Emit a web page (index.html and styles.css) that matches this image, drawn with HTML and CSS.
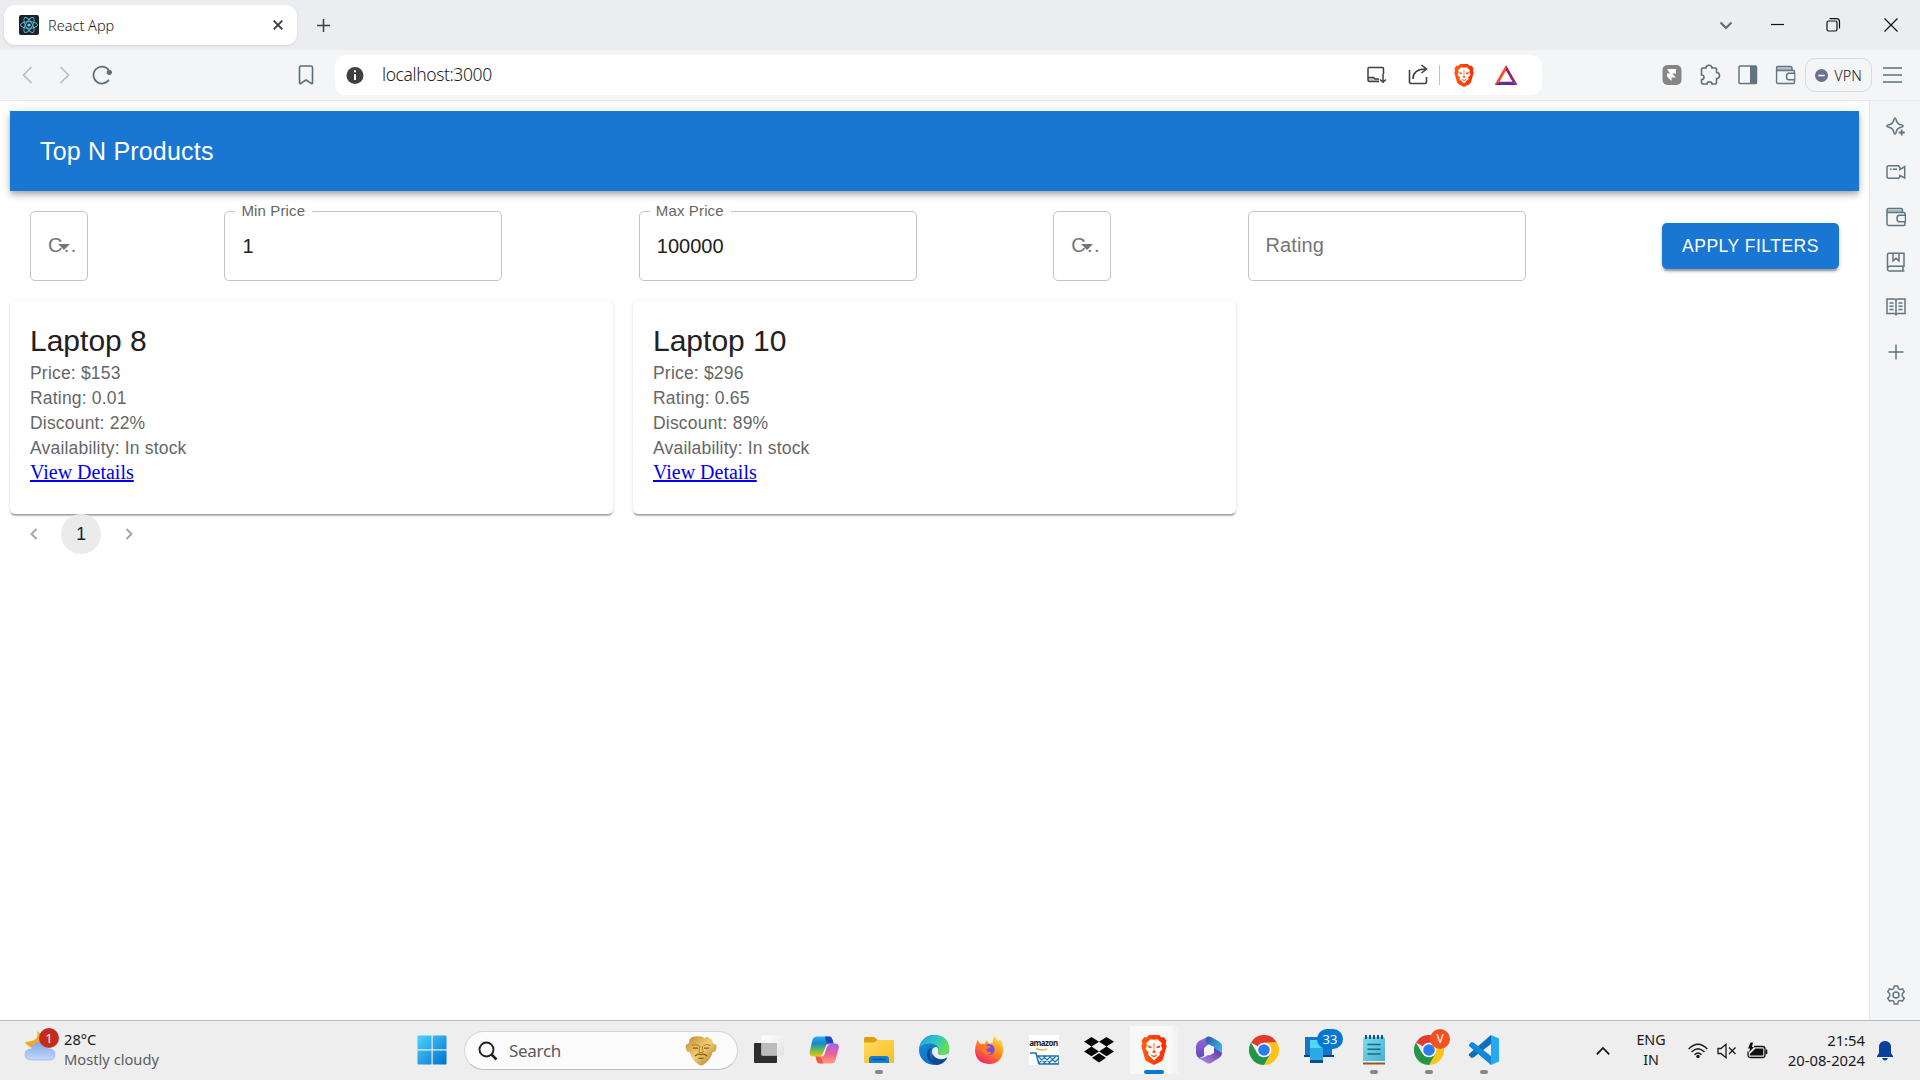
FILE: index.html
```html
<!DOCTYPE html>
<html lang="en">
<head>
<meta charset="utf-8">
<title>React App</title>
<link rel="stylesheet" href="styles.css">
</head>
<body>
<svg class="defs" width="0" height="0">
  <defs>
    <linearGradient id="brave" x1="0" x2="1"><stop offset="0" stop-color="#ff5a10"/><stop offset="1" stop-color="#ff2a00"/></linearGradient>
    <linearGradient id="win" x1="0" y1="0" x2="1" y2="1"><stop offset="0" stop-color="#4fd3ff"/><stop offset="1" stop-color="#0070cf"/></linearGradient>
    <linearGradient id="gold" x1="0" y1="0" x2="1" y2="1"><stop offset="0" stop-color="#c08a2c"/><stop offset=".5" stop-color="#efce78"/><stop offset="1" stop-color="#a86e16"/></linearGradient>
    <linearGradient id="cloud" x1="0" y1="0" x2="0" y2="1"><stop offset="0" stop-color="#7ea6e6"/><stop offset="1" stop-color="#c3d8f8"/></linearGradient>
    <linearGradient id="copA" x1="0" y1="0" x2="0" y2="1"><stop offset="0" stop-color="#20b4f4"/><stop offset=".35" stop-color="#1688c8"/><stop offset=".7" stop-color="#6fbf4a"/><stop offset="1" stop-color="#f4c20c"/></linearGradient>
    <linearGradient id="copB" x1="0" y1="0" x2="0" y2="1"><stop offset="0" stop-color="#a564f0"/><stop offset=".5" stop-color="#e8609a"/><stop offset="1" stop-color="#ffa070"/></linearGradient>
    <linearGradient id="folder" x1="0" y1="0" x2="1" y2="1"><stop offset="0" stop-color="#ffdc62"/><stop offset="1" stop-color="#fcbc1e"/></linearGradient>
    <linearGradient id="edgeTop" x1="0" y1="0" x2="1" y2=".5"><stop offset="0" stop-color="#1f9be0"/><stop offset=".5" stop-color="#2cc3d2"/><stop offset="1" stop-color="#62e04e"/></linearGradient>
    <linearGradient id="edgeLow" x1="0" y1="0" x2="1" y2="1"><stop offset="0" stop-color="#1a8fdc"/><stop offset="1" stop-color="#0a60b4"/></linearGradient>
    <linearGradient id="fox" x1=".8" y1="0" x2=".2" y2="1"><stop offset="0" stop-color="#ffe845"/><stop offset=".45" stop-color="#ff8a1e"/><stop offset="1" stop-color="#f0186c"/></linearGradient>
    <linearGradient id="mA" x1="0" y1="0" x2="0" y2="1"><stop offset="0" stop-color="#a068d8"/><stop offset="1" stop-color="#5a4cc0"/></linearGradient>
    <linearGradient id="mB" x1="0" y1="0" x2="1" y2="1"><stop offset="0" stop-color="#2456a8"/><stop offset="1" stop-color="#45c2f4"/></linearGradient>
    <linearGradient id="mC" x1="0" y1="1" x2="1" y2="0"><stop offset="0" stop-color="#b890ee"/><stop offset="1" stop-color="#553094"/></linearGradient>
    <linearGradient id="note" x1="0" y1="0" x2="1" y2="1"><stop offset="0" stop-color="#7fdcec"/><stop offset="1" stop-color="#45aed0"/></linearGradient>
    <linearGradient id="pane" x1="0" y1="0" x2="1" y2="1"><stop offset="0" stop-color="#ffffff"/><stop offset="1" stop-color="#e2e2e2"/></linearGradient>
    <symbol id="i-brave" viewBox="0 0 26 30">
      <path d="M8 0h10l2.500 2.600 2.300-.5L25.500 6l-.9 2.300 1 3-3.400 12.200c-.4 1.400-1.200 2.200-2.300 3L13 30l-6.900-3.500c-1.100-.8-1.900-1.600-2.300-3L.4 11.300l1-3L.5 6l2.700-3.900 2.300.5z" fill="url(#brave)"/>
      <path d="M13 4.800l3.600-.6 4.200 4-.8 2.200 1.400 3.600-3 3.600.5 2.200-2.700 2.400L13 25.400l-3.200-3.200-2.700-2.400.5-2.200-3-3.600L6 10.400l-.8-2.200 4.200-4z" fill="#fff"/>
      <path d="M6.500 10.300l4.300 1.400-.7 1.600-2.800-.7zM19.500 10.300l-4.300 1.400.7 1.600 2.800-.7zM12.500 8.200h1l-.2 7 1.700 1.700L13 18.300l-2-1.400 1.700-1.700zM9.500 18.900l3.500 2.200 3.500-2.200-1.400 2.300L13 22.300l-2.100-1.100z" fill="url(#brave)"/>
    </symbol>
    <symbol id="i-wallet" viewBox="0 0 20 20">
      <path d="M1 2.600h15v3.200H1z" fill="#aebac1"/>
      <path d="M19 8V6.600q0-1-1-1H1V3q0-1.500 1.500-1.500H15q1.500 0 1.500 1.500v2.600M1 5v11.800q0 1.600 1.600 1.600h15.200q1.200 0 1.200-1.200V15M19.500 8.200h-6.200q-2.300 0-2.300 3.300t2.300 3.300h6.200z" fill="none" stroke="#60757f" stroke-width="1.500"/>
    </symbol>
    <symbol id="i-chrome" viewBox="0 0 30 30">
      <path d="M15 15L2 7.500A15 15 0 0 1 28 7.500L15 8z" fill="#e33b2e"/>
      <path d="M28 7.500A15 15 0 0 1 15 30l6.500-11.300L15 7.500z" fill="#fcc419"/>
      <path d="M15 30A15 15 0 0 1 2 7.500L8.500 18.700 15 15l6.500 3.700z" fill="#249447"/>
      <circle cx="15" cy="15" r="7.300" fill="#fff"/><circle cx="15" cy="15" r="5.800" fill="#2c7cf0"/>
    </symbol>
  </defs>
</svg>

<div class="screen">
  <header class="tabstrip">
    <div class="tab">
      <svg class="favicon" width="20" height="20" viewBox="0 0 20 20"><rect width="20" height="20" rx="2" fill="#202124"/><g fill="none" stroke="#4fb8d4" stroke-width="1"><ellipse cx="10" cy="10" rx="8.500" ry="3.300"/><ellipse cx="10" cy="10" rx="8.500" ry="3.300" transform="rotate(60 10 10)"/><ellipse cx="10" cy="10" rx="8.500" ry="3.300" transform="rotate(120 10 10)"/></g><circle cx="10" cy="10" r="1.600" fill="#61dafb"/></svg>
      <span class="tab-title">React App</span>
      <svg width="10" height="10" viewBox="0 0 10 10"><path d="M.7.7l8.600 8.600M9.300.7L.7 9.300" stroke="#36393d" stroke-width="1.800"/></svg>
    </div>
    <svg class="new-tab" width="13" height="13" viewBox="0 0 13 13"><path d="M6.500 0v13M0 6.500h13" stroke="#3b3f44" stroke-width="1.500"/></svg>
    <div class="window-controls">
      <svg width="46" height="20" viewBox="0 0 46 20"><path d="M18.500 7.500l5.500 5.500 5.500-5.500" fill="none" stroke="#5c7079" stroke-width="2.200"/></svg>
      <svg width="56" height="20" viewBox="0 0 56 20"><path d="M23 9.500h13" stroke="#111" stroke-width="1.200"/></svg>
      <svg width="58" height="20" viewBox="0 0 58 20"><g fill="none" stroke="#111" stroke-width="1.200"><rect x="23" y="6" width="10" height="10" rx="1.500"/><path d="M25.500 3.600h7q3 0 3 3v7"/></g></svg>
      <svg width="58" height="20" viewBox="0 0 58 20"><path d="M22.500 3.500l13 13M35.500 3.500l-13 13" stroke="#111" stroke-width="1.200"/></svg>
    </div>
  </header>

  <nav class="toolbar">
    <svg width="38" height="22" viewBox="0 0 38 22"><path d="M23.500 3l-8 8 8 8" fill="none" stroke="#b4bfc5" stroke-width="1.700"/></svg>
    <svg width="38" height="22" viewBox="0 0 38 22"><path d="M14.500 3l8 8-8 8" fill="none" stroke="#b4bfc5" stroke-width="1.700"/></svg>
    <svg width="38" height="22" viewBox="0 0 38 22"><path d="M24.800 6A8.500 8.500 0 1 0 25 15.800" fill="none" stroke="#5c7079" stroke-width="1.700"/><circle cx="25.300" cy="8.300" r="2.600" fill="#5c7079"/></svg>
    <svg class="bookmark" width="38" height="22" viewBox="0 0 38 22"><path d="M12.500 3.500q0-1.500 1.500-1.500h10q1.500 0 1.500 1.500V19q0 1-1 .5L19 16l-5.500 3.500q-1 .5-1-.5z" fill="none" stroke="#5c7079" stroke-width="1.600"/></svg>
    <div class="urlbar">
      <svg width="20" height="20" viewBox="0 0 20 20"><circle cx="10" cy="10.500" r="8.500" fill="#3e4044"/><path d="M10 5.200v2M10 9v6" stroke="#fff" stroke-width="2"/></svg>
      <span class="url">localhost:3000</span>
      <svg width="42" height="22" viewBox="0 0 42 22"><path d="M13 13h5l1.300 1.500H24v3H13z" fill="#c9c9cc"/><g fill="none" stroke="#3e4044" stroke-width="1.500"><path d="M28.500 10V4.500q0-1-1-1H14q-1 0-1 1V16q0 1.500 1.500 1.500H24M12.500 13.500h6l1.500 1.500h4M28 10v8M25 15.500l3 2.700 3-2.700"/></g></svg>
      <svg width="42" height="22" viewBox="0 0 42 22"><g fill="none" stroke="#3e4044" stroke-width="1.600"><path d="M12.500 6v12q0 1.500 1.500 1.500h14q1.500 0 1.500-1.500v-5M16 15q0-9.500 12-10M24.500 1l5 4-5 4"/></g></svg>
      <span class="url-divider"></span>
      <svg width="42" height="24" viewBox="0 0 42 24"><use href="#i-brave" x="11" y="1" width="20" height="23"/></svg>
      <svg width="42" height="22" viewBox="0 0 42 22"><path d="M21 1L9.500 21l5-3.200L21 6.500z" fill="#ff4724"/><path d="M21 1l11.500 20-5-3.200L21 6.500z" fill="#9e1f63"/><path d="M9.500 21h23l-5-3.200h-13z" fill="#662d91"/></svg>
    </div>
    <svg class="extension" width="38" height="22" viewBox="0 0 38 22"><rect x="9.500" y="1" width="19" height="20" rx="5" fill="#868686"/><path d="M14 5h9v4.500h-4l4 4h-4.500V17L14 12.500V9.500h3z" fill="#fff"/></svg>
    <svg width="38" height="22" viewBox="0 0 38 22"><path d="M11.500 4H15q0-2.800 3-2.800T21 4h3.500q1 0 1 1v3.500q3 0 3 3t-3 3V19q0 1-1 1H21q0-2.300-2.500-2.300T16 20h-4q-1.500 0-1.500-1.500V15.500q2.500 0 2.500-2.300T10.500 11V5q0-1 1-1z" fill="none" stroke="#5c7079" stroke-width="1.600"/></svg>
    <svg width="38" height="22" viewBox="0 0 38 22"><rect x="10" y="2" width="17.500" height="17.500" rx="1" fill="none" stroke="#60757f" stroke-width="1.500"/><path d="M21 2h7v18h-7z" fill="#60757f"/></svg>
    <svg width="38" height="22" viewBox="0 0 38 22"><use href="#i-wallet" x="8.500" y="1" width="20" height="20"/></svg>
    <div class="vpn"><svg width="13" height="13" viewBox="0 0 13 13"><circle cx="6.500" cy="6.500" r="6.500" fill="#6b6f95"/><path d="M3.300 6.500h6.400" stroke="#fff" stroke-width="1.600"/></svg><span>VPN</span></div>
    <svg width="40" height="22" viewBox="0 0 40 22"><path d="M11 4h19M11 11h19M11 18h19" stroke="#5c7079" stroke-width="1.500"/></svg>
  </nav>

  <div class="browser-body">
    <main class="page">
      <div class="appbar"><h1>Top N Products</h1></div>
      <form class="filters">
        <div class="field select"><span class="select-label">C..</span><svg class="caret" width="12" height="6" viewBox="0 0 12 6"><path d="M0 0h12L6 6z" fill="#757575"/></svg></div>
        <div class="field input"><label>Min Price</label><span class="value">1</span></div>
        <div class="field input"><label>Max Price</label><span class="value">100000</span></div>
        <div class="field select"><span class="select-label">C..</span><svg class="caret" width="12" height="6" viewBox="0 0 12 6"><path d="M0 0h12L6 6z" fill="#757575"/></svg></div>
        <div class="field input"><span class="value placeholder">Rating</span></div>
        <button class="apply" type="button">APPLY FILTERS</button>
      </form>
      <section class="cards">
        <article class="card">
          <h2>Laptop 8</h2>
          <p>Price: $153</p><p>Rating: 0.01</p><p>Discount: 22%</p><p>Availability: In stock</p>
          <a href="#">View Details</a>
        </article>
        <article class="card">
          <h2>Laptop 10</h2>
          <p>Price: $296</p><p>Rating: 0.65</p><p>Discount: 89%</p><p>Availability: In stock</p>
          <a href="#">View Details</a>
        </article>
      </section>
      <div class="pagination">
        <svg width="40" height="40" viewBox="0 0 40 40"><path d="M23.500 15l-5 5 5 5" fill="none" stroke="#a6a6a6" stroke-width="2"/></svg>
        <span class="current">1</span>
        <svg width="40" height="40" viewBox="0 0 40 40"><path d="M17.500 15l5 5-5 5" fill="none" stroke="#a6a6a6" stroke-width="2"/></svg>
      </div>
    </main>
    <aside class="sidebar">
      <svg viewBox="0 0 20 20"><path d="M9 1q.8 0 1.200 2Q11 7 15 7.800q2.200.4 2.200 1.200T15 10.200Q11 11 10.200 15 9.800 17.200 9 17.200T7.800 15Q7 11 3 10.200.8 9.800.8 9T3 7.800Q7 7 7.800 3 8.200 1 9 1z" fill="none" stroke="#60757f" stroke-width="1.500"/><path d="M15.700 12.500v6M12.700 15.500h6" stroke="#60757f" stroke-width="1.800"/></svg>
      <svg viewBox="0 0 20 20"><path d="M3 3.700h9.500l1.500 2v2l4.700-3V16L14 13.500v1.200l-1.300 1.600H3q-2 0-2-2V5.700q0-2 2-2z" fill="none" stroke="#60757f" stroke-width="1.500"/><path d="M4 7.300h1.500M6.800 7.300H11" stroke="#60757f" stroke-width="1.500"/></svg>
      <svg viewBox="0 0 20 20"><use href="#i-wallet"/></svg>
      <svg viewBox="0 0 20 20"><path d="M3 1.200h15v13H4q-2.500 0-2.500 2.500T4 19h14.500M1.500 16.500v-14q0-1.300 1.500-1.300M17 14.500V19M7 1.500v7.300l3-2.500 3 2.500V1.500" fill="none" stroke="#60757f" stroke-width="1.500"/></svg>
      <svg viewBox="0 0 20 20"><path d="M1 2h7.500Q10 2 10 3.500 10 2 11.500 2H19v14.500h-7.500q-1.500 0-1.500 2 0-2-1.500-2H1zM10 3.500v14M3.500 6h4M3.500 9.200h4M3.500 12.400h4M12.500 6h4M12.500 9.200h4M12.500 12.400h4" fill="none" stroke="#60757f" stroke-width="1.500"/></svg>
      <svg viewBox="0 0 20 20"><path d="M10 2.500v15M2.500 10h15" stroke="#60757f" stroke-width="1.500"/></svg>
      <svg class="gear" viewBox="0 0 20 20"><path d="M8.300 1h3.400l.6 2.700 1.600.9 2.600-.8 1.800 3-2 1.900v2.600l2 1.900-1.800 3-2.600-.8-1.600.9-.6 2.700H8.300l-.6-2.700-1.600-.9-2.600.8-1.800-3 2-1.900V8.700l-2-1.900 1.800-3 2.600.8 1.600-.9z" fill="none" stroke="#60757f" stroke-width="1.500" stroke-linejoin="round"/><circle cx="10" cy="10" r="3" fill="none" stroke="#60757f" stroke-width="1.500"/></svg>
    </aside>
  </div>

  <footer class="taskbar">
    <div class="weather">
      <div class="weather-icon">
        <svg width="32" height="36" viewBox="0 0 32 36"><path d="M13 6q4 10-12 11 4 8 14 5 8-9-2-16z" fill="#f6a71c"/><path d="M8 35q-7 0-7-5.500T7.500 24q1.500-7 8-7 6 0 8 6.500 7.500 0 7.500 6T25 35z" fill="url(#cloud)" stroke="#8fb0e8" stroke-width=".6"/></svg>
        <span class="alert">1</span>
      </div>
      <div class="weather-text"><span>28°C</span><span class="cond">Mostly cloudy</span></div>
    </div>
    <div class="apps">
      <div class="app start"><svg width="30" height="30" viewBox="0 0 30 30"><path d="M1.500.5h13v13.800H.5V1.500q0-1 1-1zM15.700.5h12.800q1 0 1 1v12.800H15.700zM.5 15.500h14v14h-13q-1 0-1-1zM15.700 15.500h13.800v13q0 1-1 1H15.700z" fill="url(#win)"/></svg></div>
      <div class="search">
        <svg width="20" height="20" viewBox="0 0 20 20"><circle cx="8.500" cy="8.500" r="7" fill="none" stroke="#202020" stroke-width="1.900"/><path d="M13.500 13.500l5 5" stroke="#202020" stroke-width="2.500"/></svg>
        <span>Search</span>
        <svg width="32" height="30" viewBox="0 0 32 30"><path d="M7 1q5-1.500 11 0l1.500 1.500L22 .8l5 3 1 3.500 3.500 1.500q.5 4-1.500 7l-2.500.5q-1 5-5.500 9.500-3.500 3.700-5.500 3.700T10.500 26Q6 21.500 5 16.500l-3-1Q.3 12 .8 9L4 7l.5-3.500z" fill="url(#gold)"/><path d="M7 9.500q3.500-2 7 0M18.500 9.500q3.500-2 7 0M14.800 10l-.8 6.500h4l-.8-6.500" fill="none" stroke="#a8741f" stroke-width=".9"/><path d="M8 12.200h5M19 12.200h5M10 20q3-2.700 6-1.300 3-1.400 6 1.300M13.500 22.300h5" fill="none" stroke="#8d5a12" stroke-width="1.200"/></svg>
      </div>
      <div class="app"><svg width="30" height="30" viewBox="0 0 30 30"><rect x="0" y="8" width="23" height="20" rx="1" fill="#2e2e2e"/><rect x="7.500" y="0.500" width="22.500" height="20" rx="1" fill="url(#pane)"/><path d="M7.500 8H23v12.500H7.500z" fill="#bcbcbc"/></svg></div>
      <div class="app"><svg width="30" height="30" viewBox="0 0 30 30"><path d="M8 1.500h12q2.500 0 3.400 3l1.200 4h-4q-2 0-3 3l-2.300 7q-1 3-4 3H4.500q-4.500 0-3.800-4.500L3.400 5Q4.500 1.500 8 1.500z" fill="url(#copA)"/><path d="M16 1.500h4q2.500 0 3.400 3l1.200 4h-5q-2.500-.5-3-3z" fill="#1b46c4"/><path d="M22 28.500H11q-2.500 0-3.200-2.500l-1.300-4.500h4q2.500 0 3.500-3l2.500-7q1-3 4-3H26q4.500 0 3.800 4.500L26.500 25q-1 3.500-4.500 3.500z" fill="url(#copB)"/><path d="M14 28.500h-3q-2.500 0-3.200-2.500l-1.300-4.500H10q3 .5 4 7z" fill="#f4593c"/><path d="M17.500 9.500h3q-2 .5-3 3.500l-2 6.500q-.8 2-3 2h-1q1.500-.5 2.500-3.500z" fill="#fff" opacity=".85"/></svg></div>
      <div class="app running"><svg width="30" height="30" viewBox="0 0 30 30"><path d="M0 3.500Q0 2 1.500 2h9l3 3H30v6H0z" fill="#e0a00c"/><path d="M0 7.500h10L13.500 5H29q1 0 1 1v22H0z" fill="url(#folder)"/><path d="M5 28v-4q0-3 3-3h14q3 0 3 3v4z" fill="#1280d0"/><path d="M8.500 24.500h13" stroke="#0a4f96" stroke-width="1.500"/></svg></div>
      <div class="app"><svg width="30" height="30" viewBox="0 0 30 30"><circle cx="15" cy="15" r="15" fill="url(#edgeLow)"/><path d="M.2 13A15 15 0 0 1 15 0q15 0 15.100 14 0 6-7.500 6-4.600 0-3.600-2.500 1.500-2.500 0-5Q16 8 10 8.500 3 9 .2 13z" fill="url(#edgeTop)"/><path d="M12 12.500q-4 10 4 14.500 6 2 11.800-4-3 6-9.800 7-8-1-10-9-.5-6 4-8.500z" fill="#0c4a94"/><path d="M17.500 12q-4.500 0-4.500 5t7 7q5 1 9-2l1-5q-2 3-7.500 3-4.500-.5-3.500-3 1.500-2.500-1.500-5z" fill="#eee"/><path d="M13.500 19q3 6 9 5.500 4-.5 6-2-3 6.500-11 7-6-3-4-10.500z" fill="#0c4a94"/></svg></div>
      <div class="app"><svg width="30" height="30" viewBox="0 0 30 30"><path d="M3.500 5l3 4q3-1 4 0l2-3.500L14 7l1.500 2 3.500-2q-.5-4 2-6.500 1 4 3.500 6L26 4q4 6 3 13Q27 29 15 29 1.500 28 1 15.500 1.200 10 3.500 5z" fill="url(#fox)"/><circle cx="15" cy="14.500" r="5.600" fill="#7a4be2"/><path d="M7 11q4-2 7 0l3 .8q-3 2.400-5 2.400Q13 18 18 17q-2 3.500-6 2.500-6-3-5-8.500z" fill="#ff7a1c"/></svg></div>
      <div class="app"><div class="amazon"><span>amazon</span><svg width="30" height="18" viewBox="0 0 30 18"><path d="M7 .5q6 3 11 .2" fill="none" stroke="#ff9a1e" stroke-width="1.200"/><path d="M1 5h6l3 11M8 8h22v8H10" fill="none" stroke="#2175b0" stroke-width="1.600"/><path d="M9 16l8-8M14 16l8-8M19 16l8-8M24 16l6-6M9 8l8 8M14 8l8 8M20 8l8 8" stroke="#2175b0" stroke-width="1.300"/></svg></div></div>
      <div class="app"><svg width="30" height="26" viewBox="0 0 30 26"><path d="M7.500 0L15 4.800 7.500 9.600 0 4.800zM22.500 0L30 4.800l-7.500 4.800L15 4.800zM7.500 9.600l7.500 4.800-7.500 4.800L0 14.400zM22.500 9.600l7.500 4.800-7.500 4.800-7.500-4.800zM15 16.200l7 4.600-7 4.600-7-4.600z" fill="#050505"/></svg></div>
      <div class="app active"><svg width="26" height="30" viewBox="0 0 26 30"><use href="#i-brave"/></svg></div>
      <div class="app"><svg width="28" height="28" viewBox="0 0 28 28"><path d="M12 1q2-1 4 1l-2 6-5 4v8L4 22q-3-2-3-5v-7q0-3 3-5z" fill="url(#mA)"/><path d="M12 1q2-1 4 0l8 4.500q3 2 3 4.500v8l-8-3v-4l-8-4q-1-4 1-6z" fill="url(#mB)"/><path d="M27 17q0 3-3 5l-8 5q-2 1-4 0l-9-5q7 0 10-3l6-3.500V12z" fill="url(#mC)"/><path d="M11 10.500l3-1.800 5 2.800v5.500l-5 2.500-3.500-2z" fill="#f4f2fa"/></svg></div>
      <div class="app"><svg width="30" height="30"><use href="#i-chrome"/></svg></div>
      <div class="app"><svg width="30" height="30" viewBox="0 0 30 30"><path d="M1 2h27v18H1z" fill="#1776c4"/><path d="M0 20h30v2H0z" fill="#0b4788"/><path d="M6 5h13v22H6z" fill="#2aa9e6"/><path d="M6 5h13v8H6z" fill="#50d8f8"/><path d="M6 25h13v3H6z" fill="#0f4c88"/></svg><span class="badge count">33</span></div>
      <div class="app running"><svg width="22" height="30" viewBox="0 0 22 30"><rect y="2" width="22" height="26" rx="2" fill="url(#note)"/><path d="M0 27h22v2.500H0z" fill="#9a5718"/><path d="M0 26h22v1.500H0z" fill="#e8f4f6"/><path d="M3 0v4M7 0v4M11 0v4M15 0v4M19 0v4" stroke="#13566c" stroke-width="2"/><path d="M4.500 9.500h13M4.500 14.300h13M4.500 19h13" stroke="#0f6b86" stroke-width="1.600"/></svg></div>
      <div class="app running"><svg width="30" height="30"><use href="#i-chrome"/></svg><span class="badge profile">V</span></div>
      <div class="app running"><svg width="30" height="30" viewBox="0 0 30 30"><path d="M22 0l8 3.500v23L22 30z" fill="#27a9f2"/><path d="M22 0v9L4.500 22.500 2.500 23 0 20.500v-1.500z" fill="#0a70bd"/><path d="M22 30v-9L4.500 7.500 2.500 7 0 9.500V11z" fill="#1289d6"/></svg></div>
    </div>
    <div class="tray">
      <svg width="14" height="10" viewBox="0 0 14 10"><path d="M.8 8.300L7 2l6.200 6.300" fill="none" stroke="#111" stroke-width="1.700"/></svg>
      <div class="lang"><span>ENG</span><span>IN</span></div>
      <svg class="wifi" width="20" height="16" viewBox="0 0 20 16"><g fill="none" stroke="#1a1a1a" stroke-width="1.400"><path d="M.7 6Q10-3.500 19.300 6M3.500 9q6.500-6.500 13 0M6.500 11.800q3.500-3.500 7 0"/></g><circle cx="10" cy="13.500" r="1.700" fill="#1a1a1a"/></svg>
      <svg class="volume" width="20" height="16" viewBox="0 0 20 16"><path d="M1 5.500h3L9 1.300v13.400l-5-4.200H1zM12 4.500l6.500 6.500M18.500 4.500L12 11" fill="none" stroke="#1a1a1a" stroke-width="1.300"/></svg>
      <svg class="battery" width="21" height="16" viewBox="0 0 21 16"><path d="M7 3.500h8.500q2.500 0 2.500 2.500v6q0 2.500-2.500 2.500h-12Q1 14.500 1 12V8.500" fill="none" stroke="#111" stroke-width="1.300"/><path d="M8.500 5.500h7.800v7H2.800V11zM18.500 6.500h1.800v4.500h-1.800zM3.500-.5L1 5.500h2L2 9.500l5-5.500H5l1-4.500z" fill="#111"/></svg>
      <div class="clock"><span>21:54</span><span>20-08-2024</span></div>
      <svg class="bell" width="16" height="20" viewBox="0 0 16 20"><path d="M8 0q6 0 6 6.500V12l2 3v1H0v-1l2-3V6.500Q2 0 8 0zM5 17h6q-1 2.500-3 2.500T5 17z" fill="#07409a"/></svg>
    </div>
  </footer>
</div>
</body>
</html>
```
FILE: styles.css
```css
* { box-sizing: border-box; }
body { margin: 0; background: #fff; font-family: "Liberation Sans", Arial, sans-serif; }
svg { display: block; flex: none; }
h1, h2, p { margin: 0; font-weight: 400; }
.defs { position: absolute; }
.screen { width: 1920px; height: 1080px; display: flex; flex-direction: column; overflow: hidden; }

/* Browser chrome */
.tabstrip, .toolbar, .taskbar { font-family: "Noto Sans", "Open Sans", sans-serif; }
.tabstrip { height: 50px; flex: none; display: flex; align-items: center; padding-left: 4px; background: #ebedf1; }
.tab { width: 293px; height: 40px; display: flex; align-items: center; padding: 0 14px 0 15px; border-radius: 11px; background: #fff; box-shadow: 0 1px 3px rgba(0, 0, 0, .1); }
.tab-title { flex: 1; margin-left: 9px; padding-bottom: 1px; font-size: 14.500px; font-weight: 300; color: #222; }
.new-tab { margin-left: 20px; }
.window-controls { display: flex; margin-left: auto; }
.toolbar { height: 51px; flex: none; display: flex; align-items: center; padding-left: 8px; background: #f3f5f7; border-bottom: 1px solid #e7eaed; }
.bookmark { margin-left: 165px; }
.urlbar { width: 1207px; height: 40px; margin-left: 10px; padding: 0 15px 0 10px; display: flex; align-items: center; border-radius: 11px; background: #fff; }
.url { flex: 1; margin-left: 17px; padding-bottom: 2px; font-size: 17.500px; font-weight: 300; color: #222; letter-spacing: -.4px; }
.url-divider { width: 1px; height: 20px; margin-right: 3px; background: #bfc0c3; }
.extension { margin-left: 111px; }
.vpn { width: 67px; height: 34px; display: flex; align-items: center; justify-content: center; gap: 6px; border: 1px solid #d3dbe0; border-radius: 10px; font-size: 14.500px; font-weight: 300; color: #1f2022; }
.browser-body { height: 919px; flex: none; display: flex; }
.sidebar { width: 51px; display: flex; flex-direction: column; align-items: center; gap: 25px; padding: 16px 0 15px 1px; background: #f3f5f7; border-left: 1px solid #e7eaed; }
.sidebar svg { width: 20px; height: 20px; }
.sidebar .gear { margin-top: auto; }

/* Web page */
.page { width: 1869px; padding: 10px; }
.appbar { height: 80px; display: flex; align-items: center; padding: 0 30px; background: #1976d2; color: #fff; box-shadow: 0 2.500px 5px -1px rgba(0, 0, 0, .2), 0 5px 6px 0 rgba(0, 0, 0, .14), 0 1px 12px 0 rgba(0, 0, 0, .12); }
.appbar h1 { font-size: 25px; letter-spacing: .19px; }
.filters { height: 110px; display: flex; align-items: center; justify-content: space-between; padding: 0 20px; }
.field { position: relative; height: 70px; display: flex; align-items: center; padding-left: 17px; border: 1px solid #c4c4c4; border-radius: 5px; font-size: 20px; color: #212121; }
.field.select { width: 58px; }
.field.input { width: 278px; }
.field label { position: absolute; top: -11px; left: 10px; padding: 0 7px 0 6px; background: #fff; font-size: 15px; line-height: 20px; letter-spacing: .14px; color: #666; white-space: nowrap; }
.select-label { letter-spacing: 1.400px; white-space: nowrap; color: #757575; padding-bottom: 2px; }
.caret { position: absolute; left: 27px; top: 32px; }
.placeholder { padding-bottom: 2px; color: #757575; letter-spacing: .1px; }
.apply { width: 177px; height: 46px; padding: 0; border: 0; border-radius: 5px; background: #1976d2; color: #fff; font: 17.500px "Liberation Sans", Arial, sans-serif; letter-spacing: .5px; box-shadow: 0 4px 1px -2.500px rgba(0, 0, 0, .2), 0 2.500px 2.500px 0 rgba(0, 0, 0, .14), 0 1px 6px 0 rgba(0, 0, 0, .12); }
.cards { display: grid; grid-template-columns: repeat(3, 1fr); gap: 20px; }
.card { height: 213px; padding: 20px 20px 30px; border-radius: 5px; background: #fff; box-shadow: 0 2.500px 1px -1.250px rgba(0, 0, 0, .2), 0 1px 1px 0 rgba(0, 0, 0, .14), 0 1px 4px 0 rgba(0, 0, 0, .12); }
.card h2 { font-size: 30px; line-height: 40px; color: #212121; }
.card p { font-size: 17.500px; line-height: 25px; letter-spacing: .19px; color: #666; }
.card a { display: block; font: 20px/23px "Liberation Serif", "Times New Roman", serif; color: #0000ee; }
.pagination { display: flex; gap: 8px; padding-left: 3px; }
.current { width: 40px; height: 40px; border-radius: 50%; background: #ebebeb; font-size: 17.500px; line-height: 40px; text-align: center; color: #212121; }

/* Taskbar */
.taskbar { height: 60px; flex: none; display: flex; align-items: stretch; border-top: 1px solid #bababa; background: #eee; color: #1a1a1a; }
.weather { width: 404px; display: flex; padding: 7px 0 0 24px; }
.weather-icon { position: relative; width: 40px; }
.weather-icon svg { margin-top: -3px; }
.alert { position: absolute; left: 15px; top: 0; width: 20px; height: 20px; border-radius: 50%; background: #c42b1c; color: #fff; font-size: 13px; line-height: 20px; text-align: center; }
.weather-text { display: flex; flex-direction: column; line-height: 20px; padding-top: 1px; font-size: 14.700px; white-space: nowrap; }
.cond { color: #5d5d5d; }
.apps { display: flex; align-items: flex-start; }
.app { position: relative; width: 55px; height: 58px; display: flex; align-items: center; justify-content: center; }
.search { width: 274px; height: 39px; margin: 10px 3px 0 5px; padding: 0 20px 0 13px; display: flex; align-items: center; border: 1px solid #d6d6d6; border-bottom-color: #bdbdbd; border-radius: 20px; background: #fbfbfb; }
.search span { flex: 1; margin-left: 11px; font-size: 17px; color: #5a5a5a; letter-spacing: -.3px; }
.running::after, .active::after { content: ""; position: absolute; bottom: 5px; width: 8px; height: 4px; border-radius: 2px; background: #868686; }
.active::after { width: 20px; background: #0078d4; }
.active { background: linear-gradient(#f8f8f8, #f8f8f8) 4px center / 43px 48px no-repeat, linear-gradient(#f3f3f3, #f3f3f3) 5px center / 47px 48px no-repeat; }
.badge { position: absolute; top: 8px; height: 20px; border-radius: 10px; color: #fff; line-height: 20px; text-align: center; }
.count { left: 26px; width: 26px; background: #0078d4; font-size: 13px; }
.profile { left: 29px; width: 20px; background: #f4511e; font-size: 12px; }
.amazon { width: 30px; height: 30px; display: flex; flex-direction: column; background: #fff; overflow: hidden; }
.amazon span { height: 13px; font-size: 8px; line-height: 16px; letter-spacing: -.5px; font-weight: 700; text-align: center; }
.tray { flex: 1; display: flex; align-items: center; padding-left: 85px; }
.lang, .clock { display: flex; flex-direction: column; line-height: 20px; padding-bottom: 1px; }
.lang { width: 44px; margin-left: 19px; align-items: center; font-size: 14.300px; }
.wifi { margin-left: 15px; }
.volume { margin-left: 9px; }
.battery { margin-left: 10px; overflow: visible; }
.clock { width: 84px; margin-left: 13px; align-items: flex-end; white-space: nowrap; font-size: 14.800px; }
.bell { margin-left: 12px; }
```
